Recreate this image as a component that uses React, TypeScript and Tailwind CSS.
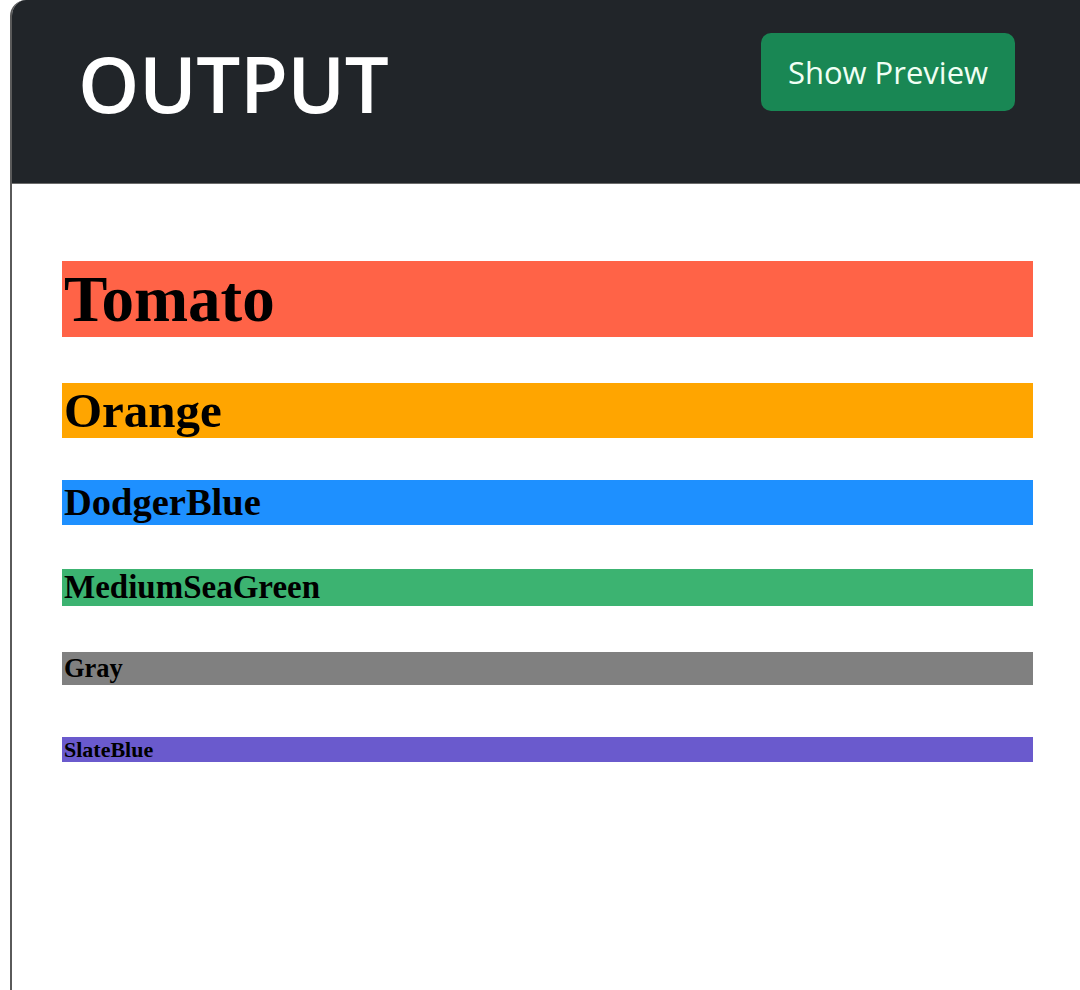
export default function App() {
  const bars = [
    { name: "Tomato", bg: "bg-[#ff6347]", cls: "h-[76px] text-[65px] leading-[76px] mt-[77px]" },
    { name: "Orange", bg: "bg-[#ffa500]", cls: "h-[55px] text-[49px] leading-[55px] mt-[46px]" },
    { name: "DodgerBlue", bg: "bg-[#1e90ff]", cls: "h-[45px] text-[38.5px] leading-[45px] mt-[42px]" },
    { name: "MediumSeaGreen", bg: "bg-[#3cb371]", cls: "h-[37px] text-[33px] leading-[37px] mt-[44px]" },
    { name: "Gray", bg: "bg-[#808080]", cls: "h-[33px] text-[26.5px] leading-[33px] mt-[46px]" },
    { name: "SlateBlue", bg: "bg-[#6a5acd]", cls: "h-[25px] text-[22px] leading-[25px] mt-[52px]" },
  ];
  return (
    <div className="w-[1080px] h-[990px] bg-white overflow-hidden">
      <div className="ml-[10px] w-[1090px] h-[990px] border-l-2 border-[#5a5a5a] rounded-tl-[16px] bg-white overflow-hidden">
        <div className="h-[184px] bg-[#212529] border-b border-[#6b6b6b] flex items-start justify-between pl-[66px] pr-[85px]">
          <h1
            className="mt-[35px] text-white text-[78px] leading-[96px] font-semibold tracking-[-0.5px]"
            style={{ fontFamily: "'Open Sans', 'Noto Sans', sans-serif" }}
          >
            OUTPUT
          </h1>
          <button
            className="mt-[33px] w-[254px] h-[78px] rounded-[10px] bg-[#198754] text-[#f0fff4] text-[31px] leading-[78px] text-center"
            style={{ fontFamily: "'Open Sans', 'Noto Sans', sans-serif" }}
          >
            Show Preview
          </button>
        </div>
        <div className="pl-[50px] w-[1021px]">
          {bars.map((b) => (
            <div
              key={b.name}
              className={`${b.bg} ${b.cls} pl-[2px] font-bold text-black whitespace-nowrap`}
              style={{ fontFamily: "'Liberation Serif', 'Times New Roman', serif" }}
            >
              {b.name}
            </div>
          ))}
        </div>
      </div>
    </div>
  );
}
